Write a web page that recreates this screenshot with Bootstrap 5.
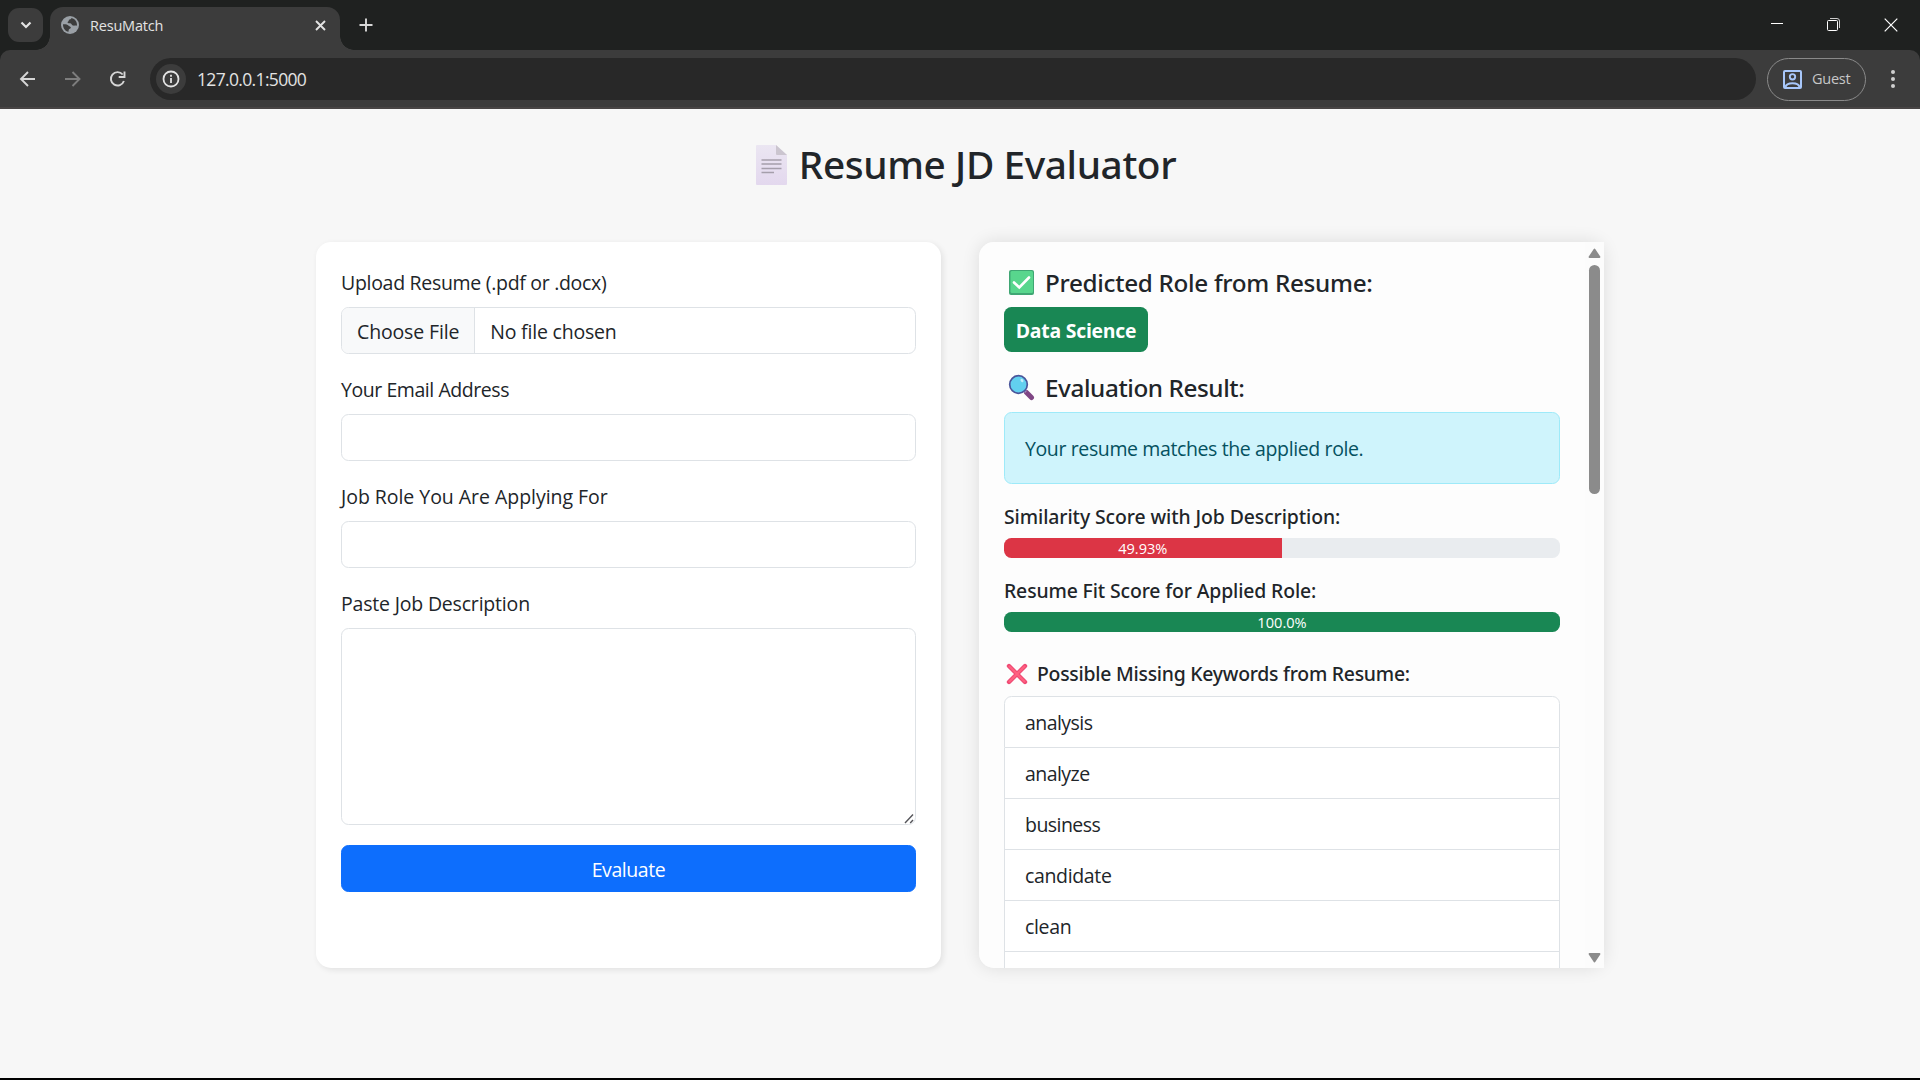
<!DOCTYPE html>
<html lang="en">
<head>
<meta charset="utf-8">
<meta name="viewport" content="width=device-width, initial-scale=1">
<title>ResuMatch</title>
<link href="https://cdn.jsdelivr.net/npm/bootstrap@5.3.0/dist/css/bootstrap.min.css" rel="stylesheet">
<style>
  html { font-size: 20px; }
  body { font-family: "Open Sans", "Noto Sans", sans-serif; background: #000; height: 1080px; overflow: hidden; color: #212529; }
  svg { display: block; flex: none; }

  /* browser window */
  .tabstrip { height: 50px; background: #1f2120; padding: 7px 0 0 8px; }
  .tab-search { width: 35px; height: 34px; border-radius: 11px; background: #3c3c3c; margin-top: 1px; }
  .browser-tab { position: relative; width: 290px; height: 43px; margin-left: 7px; border-radius: 13px 13px 0 0; background: #3c3c3c; padding: 0 13px 7px 11px; color: #e3e3e3; font-size: 14.5px; letter-spacing: -.2px; }
  .browser-tab::before, .browser-tab::after { content: ""; position: absolute; bottom: 0; width: 14px; height: 14px; }
  .browser-tab::before { left: -14px; background: radial-gradient(circle at 0 0, transparent 13.5px, #3c3c3c 14px); }
  .browser-tab::after { right: -14px; background: radial-gradient(circle at 100% 0, transparent 13.5px, #3c3c3c 14px); }
  .tab-title { margin-left: 11px; padding-top: 1px; }
  .new-tab { margin-left: 16px; }
  .win-controls { gap: 44px; padding: 0 22px 8px 0; }
  .toolbar-wrap { background: #1f2120; }
  .toolbar { height: 59px; background: #3c3c3c; border-bottom: 2px solid #484545; border-radius: 10px 10px 0 0; padding: 1px 24px 0 16px; }
  .nav-icons { gap: 24px; }
  .omnibox { height: 42px; border-radius: 21px; background: #282828; margin-left: 22px; padding-left: 6px; color: #e3e3e3; font-size: 17.5px; letter-spacing: -.66px; }
  .info-chip { width: 30px; height: 30px; border-radius: 50%; background: #3c3c3c; margin-right: 11px; }
  .guest { width: 99px; height: 43px; border: 1px solid #8a8a8a; border-radius: 22px; margin-left: 11px; margin-right: 24px; color: #c7c7c7; font-size: 14.5px; letter-spacing: -.25px; gap: 10px; padding-left: 15px; }

  /* application page */
  .page { height: 969px; background: #f7f7f7; }
  .page-title { height: 58px; margin: 27px 0 48px 12px; gap: 12px; font: 500 38.8px/58px "Noto Sans", sans-serif; letter-spacing: -.4px; }
  .page-title span { padding-bottom: 3px; }
  .panels { gap: 38px; }
  .panel { width: 625px; height: 726px; border-radius: 15px; }
  .form-panel { background: #fff; padding: 25px; box-shadow: 2px 2px 6px rgba(0,0,0,.09); }
  .result-panel { background: #fdfdfd; border-radius: 15px 0 0 15px; overflow: hidden; }
  .result-wrap { border-radius: 15px; box-shadow: 0 0 18px rgba(0,0,0,.11); }
  .result-body { width: 606px; padding: 25px 25px 0; }
  .scroll-rail { width: 19px; padding: 6px 3px 5px; background: #fcfcfc; }
  .scroll-thumb { width: 11px; height: 229px; border-radius: 6px; background: #8b8b8b; margin-top: 7px; }
  .form-label, .form-control, .btn, .alert, .list-group-item { font-size: 19.5px; line-height: 32px; }
  .form-label { display: block; height: 30px; }
  .form-control { height: 47px; }
  .form-control[type=file] { letter-spacing: -.2px; }
  .form-control::file-selector-button { letter-spacing: -.15px; }
  textarea.form-control { height: 197px; resize: none; }
  .resize-grip { position: absolute; right: 1px; bottom: 1px; }
  .btn { height: 47px; letter-spacing: -.43px; }
  .alert { height: 72px; color: #055160; }
  .list-group-item { height: 51px; }
  .list-group-item:first-child { height: 52px; }
  .panel h5, .panel h6 { font-family: "Noto Sans", sans-serif; font-weight: 500; }
  .panel h5 { height: 30px; font-size: 24.25px; line-height: 32px; gap: 10px; padding-left: 4px; }
  .panel h5 span { padding-top: 1px; }
  .panel h6 { height: 24px; font-size: 19.4px; line-height: 26px; }
  .panel h6.t-missing { height: 24px; margin-top: 30px; letter-spacing: -.25px; gap: 9px; padding-left: 2px; }
  .role-badge { font-size: 19.4px; height: 45px; width: 144px; line-height: 22px; padding: 12.5px 0; letter-spacing: -.23px; }
  .progress { font-size: 14.6px; }
  .progress-bar { line-height: 21px; padding-top: 1px; }
  .t-upload { letter-spacing: -.3px; }
  .t-email { letter-spacing: -.44px; }
  .t-role { letter-spacing: -.04px; }
  .t-paste { letter-spacing: -.19px; }
  .t-predicted { letter-spacing: -.3px; }
  .t-result { letter-spacing: -.4px; }
  .t-match { letter-spacing: -.38px; }
  .t-similar { letter-spacing: -.09px; }
  .t-fit { letter-spacing: -.13px; }
  .keywords { letter-spacing: -.55px; }
  .t-wide { letter-spacing: -.35px; }
</style>
<script src="https://cdn.jsdelivr.net/npm/bootstrap@5.3.0/dist/js/bootstrap.bundle.min.js"></script>
</head>
<body>
<header>
  <div class="tabstrip d-flex">
    <div class="tab-search d-flex align-items-center justify-content-center">
      <svg width="12" height="8" viewBox="0 0 12 8"><path d="M1.500 1.500 6 6l4.500-4.500" fill="none" stroke="#e3e3e3" stroke-width="2.200"/></svg>
    </div>
    <div class="browser-tab d-flex align-items-center">
      <svg width="18" height="18" viewBox="0 0 18 18"><circle cx="9" cy="9" r="9" fill="#9aa0a6"/><path d="M2 8.200c2.200-.2 4.500.2 5.400 1.300.5.900 1.700.9 2.300 1.600.5.800-.4 1.700-1.400 2-.7.600-.7 1.700-.8 2.700C4.200 15.200 1.900 12 2 8.200z" fill="#3c3c3c"/><path d="M10.500 2.100c-.3 1.500-1.500 1.500-2.500 1.700-.4.900-.2 1.700-1.400 2.100-.3 1 .9 1.400 2.400 1.300 1.600.1 1.600 1.700 2.900 2.300 1.200.4 2.600-.2 4.100.2C16.300 6 14.100 2.900 10.500 2.100z" fill="#3c3c3c"/></svg>
      <span class="tab-title flex-grow-1">ResuMatch</span>
      <svg width="13" height="13" viewBox="0 0 13 13"><path d="M2 2l9 9M11 2l-9 9" stroke="#e3e3e3" stroke-width="1.900"/></svg>
    </div>
    <svg class="new-tab" width="30" height="36" viewBox="0 0 30 36"><path d="M10 11.500v13M3.500 18h13" stroke="#d8d8d8" stroke-width="1.900"/></svg>
    <div class="win-controls d-flex align-items-center ms-auto">
      <svg width="13" height="13" viewBox="0 0 13 13"><path d="M1 5.500h12" stroke="#fff"/></svg>
      <svg width="13" height="13" viewBox="0 0 13 13"><rect x=".5" y="2.500" width="10" height="10" rx="1" fill="none" stroke="#fff"/><path d="M3 .5h7q2.500 0 2.500 2.500v7" fill="none" stroke="#ccc"/></svg>
      <svg width="14" height="14" viewBox="0 0 14 14"><path d="M.7.700l12.600 12.600M13.300.700.7 13.300" stroke="#fff" stroke-width="1.200"/></svg>
    </div>
  </div>
  <div class="toolbar-wrap">
    <div class="toolbar d-flex align-items-center">
      <div class="nav-icons d-flex align-items-center">
        <svg width="23" height="20" viewBox="0 0 23 20"><path d="M19 10H5M12 3l-7 7 7 7" fill="none" stroke="#d6d6d6" stroke-width="1.900"/></svg>
        <svg width="22" height="20" viewBox="0 0 22 20"><path d="M2 10h14M9.500 3l7 7-7 7" fill="none" stroke="#7d7d7d" stroke-width="1.900"/></svg>
        <svg width="19" height="20" viewBox="0.8 0 19 20"><path d="M14.500 5.500A6.700 6.700 0 1 0 15.700 12" fill="none" stroke="#d6d6d6" stroke-width="1.900"/><path d="M10.500 8h5.800V2.500" fill="none" stroke="#d6d6d6" stroke-width="1.900"/></svg>
      </div>
      <div class="omnibox d-flex align-items-center flex-grow-1">
        <span class="info-chip d-flex align-items-center justify-content-center">
          <svg width="18" height="18" viewBox="0 0 18 18"><circle cx="9" cy="9" r="7.500" fill="none" stroke="#e3e3e3" stroke-width="1.800"/><path d="M9 8v5M9 4.800v2" stroke="#e3e3e3" stroke-width="1.800"/></svg>
        </span>
        <span>127.0.0.1:5000</span>
      </div>
      <div class="guest d-flex align-items-center">
        <svg width="19" height="19" viewBox="0 0 19 19"><rect x="1" y="1" width="17" height="17" rx="1" fill="none" stroke="#a8c7fa" stroke-width="2"/><circle cx="9.500" cy="6.800" r="2.700" fill="none" stroke="#a8c7fa" stroke-width="1.900"/><path d="M2.500 17c1-5 13-5 14 0" fill="none" stroke="#a8c7fa" stroke-width="2"/></svg>
        <span>Guest</span>
      </div>
      <svg width="6" height="20" viewBox="0 0 6 20"><g fill="#d0d0d0"><circle cx="3" cy="3" r="2"/><circle cx="3" cy="10" r="2"/><circle cx="3" cy="17" r="2"/></g></svg>
    </div>
  </div>
</header>

<main class="page overflow-hidden">
  <h1 class="page-title d-flex justify-content-center align-items-center">
    <svg width="31" height="40" viewBox="0 0 31 40"><defs><linearGradient id="sheet" x2="0" y2="1"><stop stop-color="#ebe6f2"/><stop offset="1" stop-color="#e3d8ee"/></linearGradient></defs><path d="M0 1q0-1 1-1h19l11 10v29q0 1-1 1H1q-1 0-1-1z" fill="url(#sheet)"/><path d="M20 0l11 10H21q-1 0-1-1z" fill="#cbc5cf"/><path d="M5.500 15h20M5.500 19h20M5.500 23.500h20M5.500 27.500h12.500" stroke="#a59eab" stroke-width="1.500"/></svg>
    <span>Resume JD Evaluator</span>
  </h1>

  <div class="panels d-flex justify-content-center">
    <form class="panel form-panel">
      <div class="mb-3">
        <label class="form-label t-upload" for="resume">Upload Resume (.pdf or .docx)</label>
        <input class="form-control" type="file" id="resume">
      </div>
      <div class="mb-3">
        <label class="form-label t-email" for="email">Your Email Address</label>
        <input class="form-control" type="email" id="email">
      </div>
      <div class="mb-3">
        <label class="form-label t-role" for="role">Job Role You Are Applying For</label>
        <input class="form-control" type="text" id="role">
      </div>
      <div class="mb-3 position-relative">
        <label class="form-label t-paste" for="jd">Paste Job Description</label>
        <textarea class="form-control" id="jd"></textarea>
        <svg class="resize-grip" width="11" height="11" viewBox="0 0 11 11"><path d="M1 10 9 1.500M6.200 10 9 7" stroke="#55555a" stroke-width="1.400"/></svg>
      </div>
      <button type="button" class="btn btn-primary w-100">Evaluate</button>
    </form>

    <div class="result-wrap">
    <section class="panel result-panel d-flex">
      <div class="result-body">
        <h5 class="d-flex align-items-center">
          <svg width="27" height="27" viewBox="0 0 27 27"><rect x="1" y="1" width="25" height="25" rx="2" fill="#3fa673"/><rect x="2.500" y="2" width="22.500" height="22" rx="1.500" fill="#58d68d"/><path d="M6 13.500l5.300 5L21 8.500" fill="none" stroke="#fff" stroke-width="2.600" stroke-linecap="round"/></svg>
          <span class="t-predicted">Predicted Role from Resume:</span>
        </h5>
        <span class="badge bg-success role-badge d-block mb-3">Data Science</span>
        <h5 class="d-flex align-items-center">
          <svg width="27" height="27" viewBox="0 0 27 27"><path d="M18.500 18.500l5 5" stroke="#7f4684" stroke-width="5" stroke-linecap="round"/><path d="M16 16l2 2" stroke="#a98bbd" stroke-width="2.500"/><circle cx="10.500" cy="10.500" r="8.800" fill="#62d0ef" stroke="#4a569b" stroke-width="1.700"/><ellipse cx="14" cy="6.500" rx="1.300" ry="1.900" fill="#c5eefa" transform="rotate(-35 14 6.500)"/></svg>
          <span class="t-result">Evaluation Result:</span>
        </h5>
        <div class="alert alert-info t-match mb-3">Your resume matches the applied role.</div>

        <h6 class="t-similar">Similarity Score with Job Description:</h6>
        <div class="progress mb-3"><div class="progress-bar bg-danger" style="width: 49.93%">49.93%</div></div>
        <h6 class="t-fit">Resume Fit Score for Applied Role:</h6>
        <div class="progress mb-3"><div class="progress-bar bg-success" style="width: 100%">100.0%</div></div>

        <h6 class="t-missing d-flex align-items-center">
          <svg width="22" height="22" viewBox="0 0 22 22"><path d="M3 3l16 16M19 3 3 19" stroke="#ef4a74" stroke-width="4.400" stroke-linecap="round"/><path d="M3.500 3.500l15 15M18.500 3.500l-15 15" stroke="#ff6180" stroke-width="2" stroke-linecap="round"/></svg>
          <span>Possible Missing Keywords from Resume:</span>
        </h6>
        <ul class="list-group keywords">
          <li class="list-group-item">analysis</li>
          <li class="list-group-item">analyze</li>
          <li class="list-group-item">business</li>
          <li class="list-group-item t-wide">candidate</li>
          <li class="list-group-item t-wide">clean</li>
          <li class="list-group-item">&nbsp;</li>
        </ul>
      </div>
      <div class="scroll-rail d-flex flex-column align-items-center">
        <svg width="13" height="10" viewBox="0 0 13 10"><path d="M6.500 1.500 11.500 9h-10z" fill="#8b8b8b" stroke="#8b8b8b" stroke-width="1.800" stroke-linejoin="round"/></svg>
        <div class="scroll-thumb"></div>
        <svg class="mt-auto" width="13" height="10" viewBox="0 0 13 10"><path d="M6.500 8.500 1.500 1h10z" fill="#8b8b8b" stroke="#8b8b8b" stroke-width="1.800" stroke-linejoin="round"/></svg>
      </div>
    </section>
    </div>
  </div>
</main>
</body>
</html>
